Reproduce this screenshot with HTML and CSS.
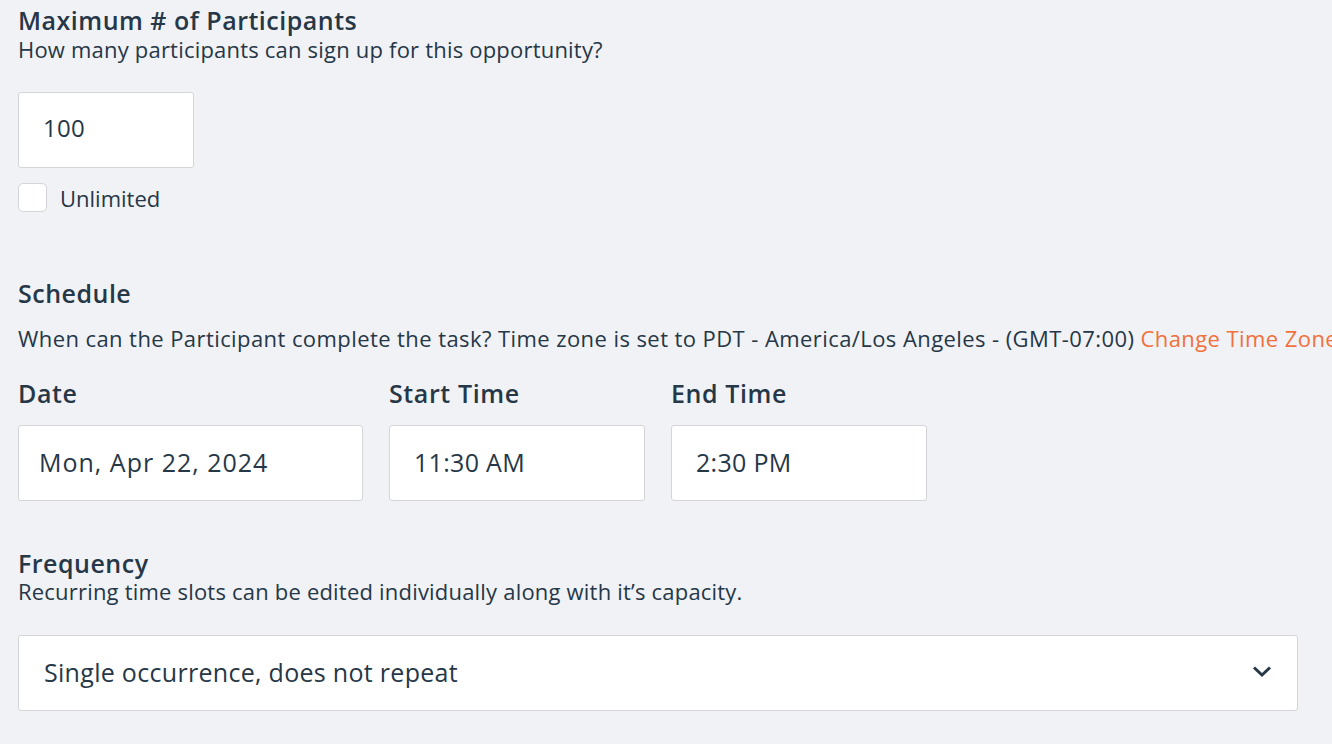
FILE: index.html
```html
<!DOCTYPE html>
<html lang="en">
<head>
  <meta charset="UTF-8" />
  <meta name="viewport" content="width=device-width, initial-scale=1.0" />
  <title>Opportunity Settings</title>
  <link rel="stylesheet" href="styles.css">
</head>
<body>

  <section class="group">
    <h2 class="title">Maximum # of Participants</h2>
    <p class="hint">How many participants can sign up for this opportunity?</p>
    <div class="field field-small">100</div>
    <label class="check">
      <span class="box"></span>
      <span>Unlimited</span>
    </label>
  </section>

  <section class="group schedule">
    <h2 class="title">Schedule</h2>
    <p class="hint hint-spaced">When can the Participant complete the task? Time zone is set to PDT - America/Los Angeles - (GMT-07:00) <a class="link" href="#">Change Time Zone</a></p>
    <div class="times">
      <div class="col col-date">
        <div class="label">Date</div>
        <div class="field field-date">Mon, Apr 22, 2024</div>
      </div>
      <div class="col col-time">
        <div class="label">Start Time</div>
        <div class="field field-time">11:30 AM</div>
      </div>
      <div class="col col-time">
        <div class="label">End Time</div>
        <div class="field field-time">2:30 PM</div>
      </div>
    </div>
  </section>

  <section class="group frequency">
    <h2 class="title">Frequency</h2>
    <p class="hint hint-tight">Recurring time slots can be edited individually along with it’s capacity.</p>
    <div class="field select">
      <span>Single occurrence, does not repeat</span>
      <svg class="chevron" width="20" height="13" viewBox="0 0 20 13">
        <path d="M2 2.5 L10 10 L18 2.5" fill="none" stroke="#263747" stroke-width="3" />
      </svg>
    </div>
  </section>

</body>
</html>
```

FILE: styles.css
```css
body {
  margin: 0;
  padding: 6px 0 0 18px;
  background: #f0f2f6;
  color: #263747;
  font-family: 'Open Sans', 'Lato', sans-serif;
  white-space: nowrap;
  overflow: hidden;
}

.title {
  margin: 0;
  font-size: 25px;
  line-height: 28px;
  font-weight: 600;
  letter-spacing: 0.5px;
}

.hint {
  margin: 2px 0 0;
  font-size: 22px;
  line-height: 26px;
  letter-spacing: 0.2px;
}

.hint-spaced {
  margin-top: 18px;
  letter-spacing: 0.42px;
}

.hint-tight {
  margin-top: 1px;
}

.link {
  color: #f2703b;
  text-decoration: none;
}

.field {
  box-sizing: border-box;
  height: 76px;
  padding-bottom: 3px;
  background: #fff;
  border: 1px solid #d3d5d9;
  border-radius: 3px;
  display: flex;
  align-items: center;
  font-size: 25px;
  letter-spacing: 0.3px;
}

.field-small {
  width: 176px;
  margin-top: 30px;
  padding-left: 24px;
  padding-bottom: 5px;
  font-size: 24px;
}

.check {
  display: flex;
  align-items: center;
  gap: 13px;
  margin-top: 15px;
  font-size: 22px;
  line-height: 26px;
}

.box {
  box-sizing: border-box;
  width: 29px;
  height: 29px;
  background: #fff;
  border: 1px solid #d3d5d9;
  border-radius: 5px;
}

.schedule {
  margin-top: 67px;
}

.times {
  display: flex;
  gap: 26px;
  margin-top: 27px;
}

.label {
  font-size: 25px;
  line-height: 30px;
  font-weight: 600;
  letter-spacing: 0.6px;
  margin-bottom: 17px;
}

.field-date {
  width: 345px;
  padding-left: 20px;
  letter-spacing: 1px;
}

.field-time {
  width: 256px;
  padding-left: 24px;
}

.frequency {
  margin-top: 48px;
}

.select {
  width: 1280px;
  margin-top: 31px;
  padding-left: 25px;
  padding-right: 25px;
  justify-content: space-between;
}
```
